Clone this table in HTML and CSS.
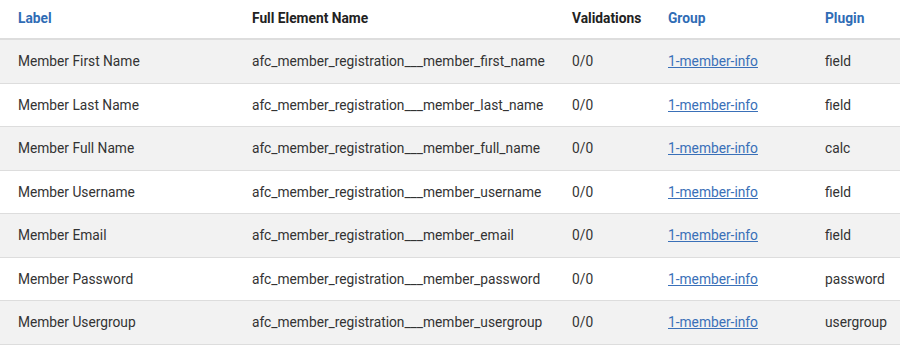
FILE: index.html
```html
<!DOCTYPE html>
<html lang="en">
<head>
    <meta charset="UTF-8">
    <title>Form Elements</title>
    <link rel="stylesheet" href="styles.css">
</head>
<body>
    <table class="elements_table">
        <colgroup>
            <col class="col_label">
            <col class="col_name">
            <col class="col_valid">
            <col class="col_group">
            <col class="col_plugin">
        </colgroup>
        <thead>
            <tr>
                <th class="sortable">Label</th>
                <th>Full Element Name</th>
                <th>Validations</th>
                <th class="sortable">Group</th>
                <th class="sortable">Plugin</th>
            </tr>
        </thead>
        <tbody>
            <tr>
                <td>Member First Name</td>
                <td>afc_member_registration___member_first_name</td>
                <td>0/0</td>
                <td><a href="#">1-member-info</a></td>
                <td>field</td>
            </tr>
            <tr>
                <td>Member Last Name</td>
                <td>afc_member_registration___member_last_name</td>
                <td>0/0</td>
                <td><a href="#">1-member-info</a></td>
                <td>field</td>
            </tr>
            <tr>
                <td>Member Full Name</td>
                <td>afc_member_registration___member_full_name</td>
                <td>0/0</td>
                <td><a href="#">1-member-info</a></td>
                <td>calc</td>
            </tr>
            <tr>
                <td>Member Username</td>
                <td>afc_member_registration___member_username</td>
                <td>0/0</td>
                <td><a href="#">1-member-info</a></td>
                <td>field</td>
            </tr>
            <tr>
                <td>Member Email</td>
                <td>afc_member_registration___member_email</td>
                <td>0/0</td>
                <td><a href="#">1-member-info</a></td>
                <td>field</td>
            </tr>
            <tr>
                <td>Member Password</td>
                <td>afc_member_registration___member_password</td>
                <td>0/0</td>
                <td><a href="#">1-member-info</a></td>
                <td>password</td>
            </tr>
            <tr>
                <td>Member Usergroup</td>
                <td>afc_member_registration___member_usergroup</td>
                <td>0/0</td>
                <td><a href="#">1-member-info</a></td>
                <td>usergroup</td>
            </tr>
        </tbody>
    </table>
</body>
</html>
```

FILE: styles.css
```css
body {
    margin: 0;
    font-family: Roboto, 'Liberation Sans', sans-serif;
    font-size: 13.75px;
    color: #333;
    background: #fff;
}

.elements_table {
    width: 900px;
    border-collapse: collapse;
    table-layout: fixed;
}

.col_label { width: 234px; }
.col_name { width: 320px; }
.col_valid { width: 96px; }
.col_group { width: 157px; }
.col_plugin { width: 93px; }

.elements_table th {
    text-align: left;
    font-weight: bold;
    color: #222;
    line-height: 20px;
    padding: 8px 18px 10px;
    border-bottom: 2px solid #ddd;
    white-space: nowrap;
}

/* Columns that can be sorted */
.elements_table th.sortable {
    color: #2f6cb5;
}

.elements_table td {
    line-height: 20px;
    padding: 11.25px 18px;
    border-bottom: 1px solid #ddd;
    white-space: nowrap;
}

.elements_table tbody tr:nth-child(odd) {
    background: #f2f2f2;
}

.elements_table a {
    color: #3a70b8;
    text-decoration: underline;
}
```
